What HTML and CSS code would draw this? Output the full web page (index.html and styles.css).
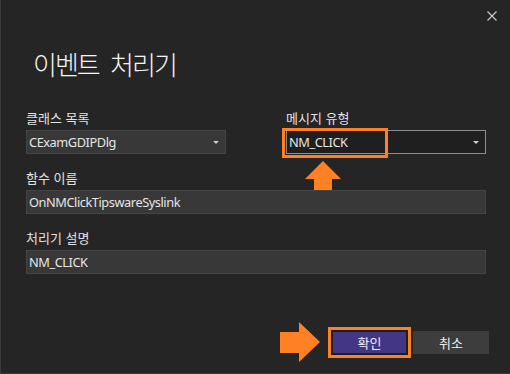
FILE: index.html
```html
<!DOCTYPE html>
<html lang="ko">
<head>
  <meta charset="UTF-8" />
  <title>이벤트 처리기</title>
  <link rel="stylesheet" href="styles.css">
</head>
<body>
  <div class="dialog">
    <div class="close">
      <svg width="10" height="10" viewBox="0 0 10 10"><path d="M0.5 0.5 L9.5 9.5 M9.5 0.5 L0.5 9.5" stroke="#c8c8c8" stroke-width="1.2" fill="none"/></svg>
    </div>

    <h1 class="title">이벤트 처리기</h1>

    <div class="form">
      <div class="row two">
        <div class="field">
          <div class="label">클래스 목록</div>
          <div class="combo">CExamGDIPDlg<span class="caret"></span></div>
        </div>
        <div class="field">
          <div class="label">메시지 유형</div>
          <div class="combo focus">
            NM_CLICK<span class="caret"></span>
            <span class="mark"></span>
            <svg class="arrow-up" width="36" height="36" viewBox="0 0 36 36">
              <polygon points="18,0 36,18 27,18 27,35 9,35 9,18 0,18" fill="#ff8123"/>
            </svg>
          </div>
        </div>
      </div>

      <div class="field">
        <div class="label">함수 이름</div>
        <div class="input">OnNMClickTipswareSyslink</div>
      </div>

      <div class="field">
        <div class="label">처리기 설명</div>
        <div class="input">NM_CLICK</div>
      </div>
    </div>

    <div class="actions">
      <svg class="arrow-right" width="40" height="40" viewBox="0 0 40 40">
        <polygon points="40,20 19,0 19,10 0,10 0,31 19,31 19,40" fill="#ff8123"/>
      </svg>
      <div class="ok-wrap"><button class="btn ok">확인</button></div>
      <button class="btn">취소</button>
    </div>
  </div>
</body>
</html>
```

FILE: styles.css
```css
body {
  margin: 0;
  background: #252525;
  font-family: "Noto Sans", "Noto Sans CJK KR", sans-serif;
  color: #f0f0f0;
}

.dialog {
  position: relative;
  box-sizing: border-box;
  width: 510px;
  height: 374px;
  padding: 0 25px 0 25px;
  border-left: 1px solid #3a3a3a;
  border-bottom: 1px solid #3a3a3a;
  background: #252525;
}

.close {
  position: absolute;
  top: 11px;
  right: 13px;
  line-height: 0;
}

.title {
  margin: 0;
  padding: 46px 0 0 7px;
  font-family: "Noto Sans CJK KR", sans-serif;
  font-size: 26px;
  font-weight: 300;
  line-height: 36px;
  color: #f4f4f4;
  letter-spacing: -2px;
  word-spacing: 6px;
}

.form {
  display: flex;
  flex-direction: column;
  gap: 15px;
  margin-top: 27px;
  width: 460px;
}

.row.two {
  display: grid;
  grid-template-columns: 200px 200px;
  column-gap: 60px;
}

.label {
  font-family: "Noto Sans CJK KR", sans-serif;
  font-size: 13px;
  line-height: 17px;
  color: #e2e2e2;
  margin-bottom: 4px;
}

.combo,
.input {
  position: relative;
  box-sizing: border-box;
  height: 24px;
  padding: 0 2px;
  background: #383838;
  border: 1px solid #444;
  font-size: 12.8px;
  letter-spacing: -0.45px;
  line-height: 22px;
  color: #e6e6e6;
  white-space: nowrap;
}

.combo.focus {
  background: #1f1f1f;
  border-color: #8e8e8e;
}

.caret {
  position: absolute;
  right: 6px;
  top: 10px;
  border-left: 3px solid transparent;
  border-right: 3px solid transparent;
  border-top: 3px solid #d0d0d0;
}

.mark {
  position: absolute;
  left: -5px;
  top: -3px;
  width: 100px;
  height: 24px;
  border: 3px solid #ff8123;
}

.arrow-up {
  position: absolute;
  left: 18px;
  top: 30px;
}

.actions {
  display: flex;
  justify-content: flex-end;
  align-items: center;
  gap: 2px;
  margin-top: 48px;
  margin-right: -4px;
}

.arrow-right {
  margin-right: 6px;
}

.ok-wrap {
  border: 3px solid #ff8123;
  line-height: 0;
}

.btn {
  box-sizing: border-box;
  width: 76px;
  height: 23px;
  padding: 0;
  border: 0;
  background: #3d3d3d;
  color: #f0f0f0;
  font-family: "Noto Sans CJK KR", sans-serif;
  font-size: 13px;
}

.btn.ok {
  width: 77px;
  height: 25px;
  background: #433685;
  border: 2px solid #1e1e1e;
}
```
